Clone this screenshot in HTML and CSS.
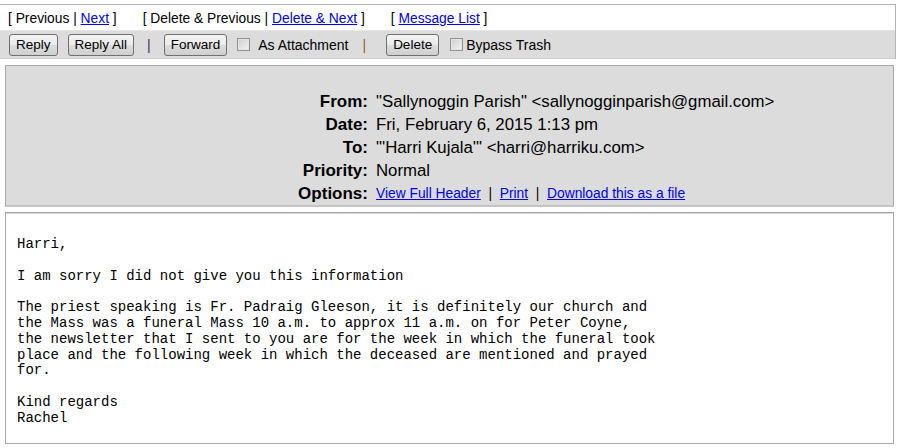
FILE: index.html
```html
<!DOCTYPE html>
<html lang="en">
<head>
    <meta charset="UTF-8">
    <title>Read Message</title>
    <link rel="stylesheet" href="styles.css">
</head>
<body>

    <!-- Navigation and actions -->
    <div class="top-frame">
        <div class="nav-row">
            <span class="nav-group">[ Previous | <a href="#">Next</a> ]</span>
            <span class="nav-group">[ Delete &amp; Previous | <a href="#">Delete &amp; Next</a> ]</span>
            <span class="nav-group">[ <a href="#">Message List</a> ]</span>
        </div>
        <div class="tool-row">
            <button class="btn">Reply</button>
            <button class="btn gap-10">Reply All</button>
            <span class="sep sep-purple">|</span>
            <button class="btn">Forward</button>
            <input type="checkbox" class="check gap-10" id="attach">
            <label for="attach" class="check-label">As Attachment</label>
            <span class="sep sep-brown">|</span>
            <button class="btn gap-6">Delete</button>
            <input type="checkbox" class="check gap-11" id="bypass">
            <label for="bypass" class="check-label tight">Bypass Trash</label>
        </div>
    </div>

    <!-- Message header -->
    <div class="msg-header">
        <div class="field-grid">
            <div class="label">From:</div>
            <div class="value">"Sallynoggin Parish" &lt;sallynogginparish@gmail.com&gt;</div>
            <div class="label">Date:</div>
            <div class="value">Fri, February 6, 2015 1:13 pm</div>
            <div class="label">To:</div>
            <div class="value">"'Harri Kujala'" &lt;harri@harriku.com&gt;</div>
            <div class="label">Priority:</div>
            <div class="value">Normal</div>
            <div class="label">Options:</div>
            <div class="value options">
                <a href="#">View Full Header</a>&nbsp;&nbsp;|&nbsp;&nbsp;<a href="#">Print</a>&nbsp;&nbsp;|&nbsp;&nbsp;<a href="#">Download this as a file</a>
            </div>
        </div>
    </div>

    <!-- Message body -->
<pre class="msg-body">Harri,

I am sorry I did not give you this information

The priest speaking is Fr. Padraig Gleeson, it is definitely our church and
the Mass was a funeral Mass 10 a.m. to approx 11 a.m. on for Peter Coyne,
the newsletter that I sent to you are for the week in which the funeral took
place and the following week in which the deceased are mentioned and prayed
for.

Kind regards
Rachel</pre>

</body>
</html>
```

FILE: styles.css
```css
/* General */
body {
    margin: 0;
    font-family: "Liberation Sans", Arial, sans-serif;
    color: #000;
    background: #fff;
}

a {
    color: #0000ee;
}

/* Top navigation */
.top-frame {
    margin-top: 4px;
    width: 895px;
    border-top: 1px solid #b4b4b4;
    border-right: 1px solid #b4b4b4;
}

.nav-row {
    height: 24px;
    padding: 1px 0 0 8px;
    display: flex;
    align-items: center;
    font-size: 13.8px;
}

.nav-group {
    margin-right: 26px;
}

.tool-row {
    height: 27px;
    padding-left: 9px;
    display: flex;
    align-items: center;
    background-color: #dcdcdc;
    border-top: 1px solid #e6e6e6;
    border-bottom: 1px solid #cfcfcf;
    font-size: 14px;
}

.btn {
    height: 22px;
    padding: 0 6px;
    font-family: "Liberation Sans", Arial, sans-serif;
    font-size: 13.5px;
    color: #000;
    border: 1px solid #707070;
    border-radius: 3px;
    background: linear-gradient(#f3f3f3, #ebebeb 50%, #dddddd 50%, #cfcfcf);
    cursor: pointer;
}

.gap-10 {
    margin-left: 10px;
}

.gap-11 {
    margin-left: 11px;
}

.gap-6 {
    margin-left: 6px;
}

.sep {
    margin: 0 13px;
}

.sep-purple {
    color: #4a2070;
}

.sep-brown {
    color: #a05a10;
    margin: 0 14px;
}

.check {
    appearance: none;
    -webkit-appearance: none;
    width: 13px;
    height: 13px;
    margin-top: 0;
    margin-bottom: 0;
    margin-right: 0;
    border: 1px solid #929292;
    background: linear-gradient(135deg, #cfcfcf, #f4f4f4);
    box-shadow: inset 0 0 0 1px #e4e4e4;
}

.check-label {
    margin-left: 8px;
    font-size: 14px;
}

.check-label.tight {
    margin-left: 3px;
}

/* Message header */
.msg-header {
    margin: 6px 0 0 5px;
    width: 887px;
    padding: 24px 0 0 0;
    background-color: #dcdcdc;
    border: 1px solid #a8a8a8;
    border-bottom: 2px solid #c4c4c4;
}

.field-grid {
    display: grid;
    grid-template-columns: 362px 1fr;
    grid-auto-rows: 23px;
    column-gap: 8px;
    align-items: center;
    font-size: 16.8px;
}

.label {
    text-align: right;
    font-weight: bold;
    font-size: 17px;
}

.options {
    font-size: 13.8px;
}

/* Message body */
.msg-body {
    margin: 5px 0 0 5px;
    width: 865px;
    padding: 24px 11px 16px 11px;
    border: 1px solid #a8a8a8;
    box-shadow: inset 0 1px 0 #d4d4d4;
    font-family: "Liberation Mono", "Courier New", monospace;
    font-size: 14px;
    line-height: 15.8px;
}
```
